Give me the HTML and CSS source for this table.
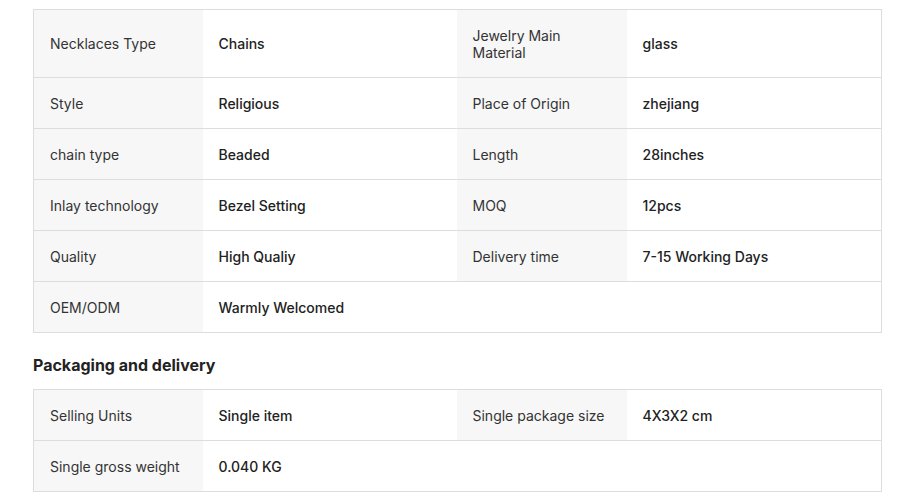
FILE: index.html
```html
<!DOCTYPE html>
<html>
<head>
<meta charset="utf-8">
<link rel="stylesheet" href="styles.css">
</head>
<body>
<div class="page">
  <table class="attrs">
    <colgroup><col class="c-label1"><col class="c-value"><col class="c-label"><col class="c-value2"></colgroup>
    <tr><td class="label">Necklaces Type</td><td class="value">Chains</td><td class="label">Jewelry Main Material</td><td class="value">glass</td></tr>
    <tr><td class="label">Style</td><td class="value">Religious</td><td class="label">Place of Origin</td><td class="value">zhejiang</td></tr>
    <tr><td class="label">chain type</td><td class="value">Beaded</td><td class="label">Length</td><td class="value">28inches</td></tr>
    <tr><td class="label">Inlay technology</td><td class="value">Bezel Setting</td><td class="label">MOQ</td><td class="value">12pcs</td></tr>
    <tr><td class="label">Quality</td><td class="value">High Qualiy</td><td class="label">Delivery time</td><td class="value">7-15 Working Days</td></tr>
    <tr><td class="label">OEM/ODM</td><td class="value" colspan="3">Warmly Welcomed</td></tr>
  </table>
  <h2 class="section-title">Packaging and delivery</h2>
  <table class="attrs">
    <colgroup><col class="c-label1"><col class="c-value"><col class="c-label"><col class="c-value2"></colgroup>
    <tr><td class="label">Selling Units</td><td class="value">Single item</td><td class="label">Single package size</td><td class="value">4X3X2 cm</td></tr>
    <tr><td class="label">Single gross weight</td><td class="value" colspan="3">0.040 KG</td></tr>
  </table>
</div>
</body>
</html>
```
FILE: styles.css
```css
html, body { margin: 0; padding: 0; background: #fff; }
body { font-family: Inter, "Noto Sans", sans-serif; font-size: 14px; color: #222; }
.page { padding: 9px 37px 0 33px; }
.attrs {
  width: 849px;
  border-collapse: collapse;
  table-layout: fixed;
  border: 1px solid #ddd;
}
.c-label1 { width: 169px; }
.c-label { width: 170px; }
.c-value { width: 254px; }
.c-value2 { width: 255px; }
.attrs td {
  border-top: 1px solid #ddd;
  border-bottom: 1px solid #ddd;
  padding: 16.5px 16px;
  line-height: 17px;
  vertical-align: middle;
}
.label { background: #f7f7f7; color: #333; font-weight: 400; }
.value { background: #fff; color: #222; font-weight: 500; }
.section-title {
  margin: 20px 0 12px;
  font-size: 16px;
  line-height: 24px;
  font-weight: 700;
  color: #222;
}
```
